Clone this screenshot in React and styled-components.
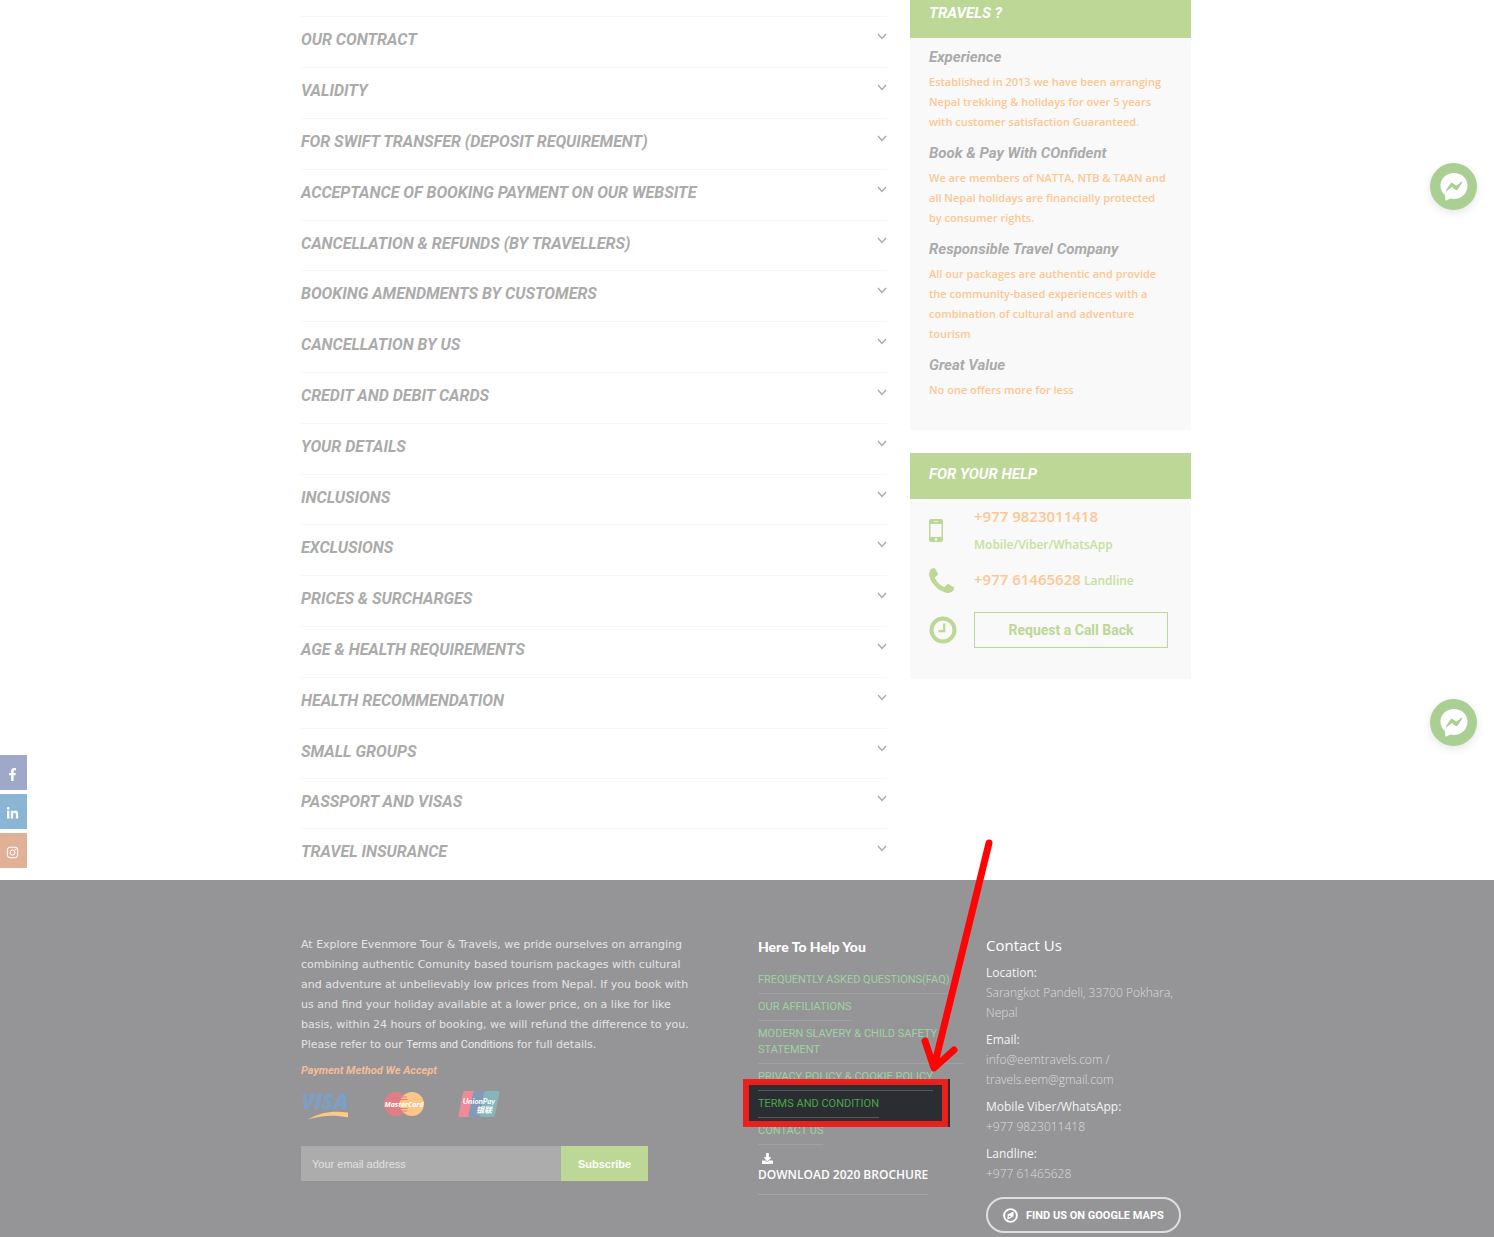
import styled, { createGlobalStyle } from "styled-components";
import {
  FaDownload,
  FaFacebookF,
  FaInstagram,
  FaLinkedinIn
} from "react-icons/fa";

const GlobalStyle = createGlobalStyle`
  * {
    box-sizing: border-box;
  }
  body {
    margin: 0;
    background: #fff;
    font-family: "Open Sans", sans-serif;
    overflow-x: hidden;
  }
  h2, h3, h4, p, ul, dl, dd {
    margin: 0;
    padding: 0;
  }
  a {
    text-decoration: none;
  }
  button {
    cursor: pointer;
  }
`;

const sections = [
  "Our Contract",
  "Validity",
  "For Swift Transfer (Deposit Requirement)",
  "Acceptance of Booking Payment on Our Website",
  "Cancellation & Refunds (By Travellers)",
  "Booking Amendments by Customers",
  "Cancellation by Us",
  "Credit and Debit Cards",
  "Your Details",
  "Inclusions",
  "Exclusions",
  "Prices & Surcharges",
  "Age & Health Requirements",
  "Health Recommendation",
  "Small Groups",
  "Passport and Visas",
  "Travel Insurance"
];

const reasons = [
  {
    title: "Experience",
    lines: [
      "Established in 2013 we have been arranging",
      "Nepal trekking & holidays for over 5 years",
      "with customer satisfaction Guaranteed."
    ]
  },
  {
    title: "Book & Pay With COnfident",
    lines: [
      "We are members of NATTA, NTB & TAAN and",
      "all Nepal holidays are financially protected",
      "by consumer rights."
    ]
  },
  {
    title: "Responsible Travel Company",
    lines: [
      "All our packages are authentic and provide",
      "the community-based experiences with a",
      "combination of cultural and adventure",
      "tourism"
    ]
  },
  { title: "Great Value", lines: ["No one offers more for less"] }
];

const contacts = [
  { label: "Location:", lines: ["Sarangkot Pandeli, 33700 Pokhara,", "Nepal"] },
  { label: "Email:", lines: ["info@eemtravels.com /", "travels.eem@gmail.com"] },
  { label: "Mobile Viber/WhatsApp:", lines: ["+977 9823011418"] },
  { label: "Landline:", lines: ["+977 61465628"] }
];

const Chevron = () => (
  <svg width="10" height="7" viewBox="0 0 10 7" fill="none" aria-hidden="true">
    <path d="M1 1l4 4.500 4-4.500" stroke="#a9a9a9" strokeWidth="1.300" />
  </svg>
);

const MobileIcon = () => (
  <svg width="14" height="23" viewBox="0 0 14 23" aria-hidden="true">
    <path
      fill="#bcd796"
      fillRule="evenodd"
      d="M2 0h10a2 2 0 0 1 2 2v19a2 2 0 0 1-2 2H2a2 2 0 0 1-2-2V2a2 2 0 0 1 2-2zM1.500 5v13h11V5zM5 2.200v.9h4v-.9zM7 19.300a1.300 1.300 0 1 0 0 2.600 1.300 1.300 0 0 0 0-2.600z"
    />
  </svg>
);

const PhoneIcon = () => (
  <svg width="25" height="25" viewBox="0 128 1408 1408" aria-hidden="true">
    <path
      fill="#bcd796"
      d="M1408 1240q0 27-10 70.500t-21 68.500q-21 50-122 106-94 51-186 51-27 0-52.500-3.500t-57.500-12.500-47.500-14.500-55.500-20.500-49-18q-98-35-175-83-128-79-264.500-215.500t-215.500-264.500q-48-77-83-175-3-9-18-49t-20.500-55.500-14.500-47.500-12.500-57.500-3.500-52.500q0-92 51-186 56-101 106-122 25-11 68.500-21t70.500-10q14 0 21 3 18 6 53 76 11 19 30 54t35 63.500 31 53.500q3 4 17.500 25t21.500 35.500 7 28.500q0 20-28.500 50t-62 55-62 53-28.500 46q0 9 5 22.500t8.500 20.500 14 24 11.500 19q76 137 174 235t235 174q2 1 19 11.500t24 14 20.500 8.500 22.500 5q18 0 46-28.500t53-62 55-62 50-28.500q14 0 28.500 7t35.500 21.500 25 17.500q25 15 53.500 31t63.500 35 54 30q70 35 76 53 3 7 3 21z"
    />
  </svg>
);

const ClockIcon = () => (
  <svg width="28" height="28" viewBox="0 0 28 28" fill="none" aria-hidden="true">
    <circle cx="14" cy="14" r="11.500" stroke="#bcd796" strokeWidth="4" />
    <path d="M15.200 7.500v7.700H9.500" stroke="#bcd796" strokeWidth="2.200" />
  </svg>
);

const CompassIcon = () => (
  <svg width="15" height="15" viewBox="0 0 15 15" fill="none" aria-hidden="true">
    <circle cx="7.500" cy="7.500" r="6.400" stroke="#fff" strokeWidth="1.900" />
    <path
      fill="#fff"
      fillRule="evenodd"
      d="M10.500 3.400v5.200l-6 3.200V6.600zM5.800 7.400v2.200l2.300-1.200z"
    />
  </svg>
);

const MessengerIcon = () => (
  <svg width="28" height="28" viewBox="0 0 28 28" aria-hidden="true">
    <path
      fill="#fff"
      d="M14 0C6.600 0 .5 5.300.5 12.700c0 4 1.900 7.100 4.500 9.500l.3 4.600c.1.700.7.800 1.200.6l3.900-1.800c1.200.3 2.400.4 3.600.4 7.500 0 13.500-5.600 13.500-13.300S21.500 0 14 0z"
    />
    <path
      fill="#a9cf92"
      d="M6 17.200l4.300-6.500c.6-.9 1.700-1.100 2.500-.5l3.500 2.600 5.200-4c.5-.4 1.100.2.800.7l-4.400 6.700c-.6.900-1.700 1.100-2.500.5l-3.500-2.600-5.200 4c-.5.400-1-.3-.7-.9z"
    />
  </svg>
);

const VisaLogo = () => (
  <svg width="50" height="32" viewBox="0 0 50 32" role="img" aria-label="Visa">
    <text
      x="1"
      y="21"
      fill="#7d9fc4"
      stroke="#7d9fc4"
      strokeWidth="0.500"
      fontFamily="Open Sans, sans-serif"
      fontSize="21"
      fontWeight="800"
      fontStyle="italic"
    >
      VISA
    </text>
    <path fill="#f9cb85" d="M7 31.500c12-7.500 26-9 40-7v5c-14-3-27-2-40 2z" />
  </svg>
);

const MasterCardLogo = () => (
  <svg width="42" height="26" viewBox="0 0 42 26" role="img" aria-label="MasterCard">
    <circle cx="13" cy="13" r="12" fill="#e07f83" />
    <circle cx="29" cy="13" r="12" fill="#fbc688" />
    <path d="M17 6h7M16.500 8.500h8M16.500 17.500h8M17 20h7" stroke="#e07f83" strokeWidth="1" />
    <text
      x="21"
      y="16"
      textAnchor="middle"
      fill="#fff"
      fontFamily="Open Sans, sans-serif"
      fontSize="7"
      fontWeight="700"
      fontStyle="italic"
    >
      MasterCard
    </text>
  </svg>
);

const UnionPayLogo = () => (
  <svg width="44" height="28" viewBox="0 0 44 28" role="img" aria-label="UnionPay">
    <path fill="#ee8b99" d="M8 1h12l-6 26H3q-2 0-1.500-2L6 3q.5-2 2-2z" />
    <path fill="#829ab5" d="M18 1h13l-6 26H13q-2 0-1.500-2L16 3q.5-2 2-2z" />
    <path fill="#85b5b8" d="M29 1h12q2 0 1.500 2L38 25q-.5 2-2 2H24q-2 0-1.500-2L27 3q.5-2 2-2z" />
    <text
      x="22"
      y="14"
      textAnchor="middle"
      fill="#fff"
      fontFamily="Lato, sans-serif"
      fontSize="8"
      fontWeight="700"
      fontStyle="italic"
    >
      UnionPay
    </text>
    <text
      x="27"
      y="23"
      textAnchor="middle"
      fill="#fff"
      fontFamily="Noto Sans CJK SC, sans-serif"
      fontSize="8"
      fontWeight="700"
      fontStyle="italic"
    >
      银联
    </text>
  </svg>
);

const App = () => {
  return (
    <>
      <GlobalStyle />
      <Container as="main">
        <Accordion>
          {sections.map(section => (
            <AccordionRow key={section}>
              <AccordionButton type="button" aria-expanded="false">
                {section}
                <Chevron />
              </AccordionButton>
            </AccordionRow>
          ))}
        </Accordion>
        <Sidebar>
          <Card>
            <CardTitle $continued>Travels ?</CardTitle>
            <Reasons>
              {reasons.map(({ title, lines }) => (
                <Reason key={title}>
                  <h4>{title}</h4>
                  {lines.map(line => (
                    <p key={line}>{line}</p>
                  ))}
                </Reason>
              ))}
            </Reasons>
          </Card>
          <Card>
            <CardTitle>For Your Help</CardTitle>
            <HelpList>
              <HelpRow>
                <MobileIcon />
                <HelpText>
                  <PhoneNumber href="tel:+9779823011418">+977 9823011418</PhoneNumber>
                  <br />
                  Mobile/Viber/WhatsApp
                </HelpText>
              </HelpRow>
              <HelpRow>
                <PhoneIcon />
                <HelpText>
                  <PhoneNumber href="tel:+97761465628">+977 61465628</PhoneNumber>{" "}
                  Landline
                </HelpText>
              </HelpRow>
              <HelpRow $last>
                <ClockIcon />
                <CallBack type="button">Request a Call Back</CallBack>
              </HelpRow>
            </HelpList>
          </Card>
        </Sidebar>
      </Container>

      <Footer>
        <Container>
          <About>
            <AboutText>
              At Explore Evenmore Tour &amp; Travels, we pride ourselves on arranging
              <br />
              combining authentic Comunity based tourism packages with cultural
              <br />
              and adventure at unbelievably low prices from Nepal. If you book with
              <br />
              us and find your holiday available at a lower price, on a like for like
              <br />
              basis, within 24 hours of booking, we will refund the difference to you.
              <br />
              Please refer to our <a href="#terms">Terms and Conditions</a> for full details.
            </AboutText>
            <PaymentTitle>Payment Method We Accept</PaymentTitle>
            <Logos>
              <VisaLogo />
              <MasterCardLogo />
              <UnionPayLogo />
            </Logos>
            <Newsletter onSubmit={e => e.preventDefault()}>
              <input type="email" placeholder="Your email address" aria-label="Your email address" />
              <button type="submit">Subscribe</button>
            </Newsletter>
          </About>

          <HelpLinks>
            <h3>Here To Help You</h3>
            <ul>
              <li><FooterLink href="#faq">Frequently Asked Questions(FAQ)</FooterLink></li>
              <li><FooterLink href="#affiliations">Our Affiliations</FooterLink></li>
              <li>
                <FooterLink href="#safety">
                  Modern Slavery &amp; Child Safety Statement
                </FooterLink>
              </li>
              <li><FooterLink href="#privacy">Privacy Policy &amp; Cookie Policy</FooterLink></li>
              <Marked id="terms">
                <Spotlight />
                <FooterLink href="#terms" $active>Terms and Condition</FooterLink>
                <Frame />
                <Arrow viewBox="0 0 50 244" aria-hidden="true">
                  <path d="M43 7L-12 231M-21 205L-12 232L8 214" />
                </Arrow>
              </Marked>
              <li><FooterLink href="#contact">Contact Us</FooterLink></li>
            </ul>
            <Brochure href="#brochure">
              <FaDownload />
              Download 2020 Brochure
            </Brochure>
          </HelpLinks>

          <Contact>
            <h3>Contact Us</h3>
            <dl>
              {contacts.map(({ label, lines }) => (
                <div key={label}>
                  <dt>{label}</dt>
                  {lines.map(line => (
                    <dd key={line}>{line}</dd>
                  ))}
                </div>
              ))}
            </dl>
            <MapLink href="#map">
              <CompassIcon />
              Find us on Google Maps
            </MapLink>
          </Contact>
        </Container>
      </Footer>

      <Social aria-label="Social links">
        <SocialLink href="#facebook" aria-label="Facebook" $color="#9fa8c8"><FaFacebookF /></SocialLink>
        <SocialLink href="#linkedin" aria-label="LinkedIn" $color="#8ab5d4"><FaLinkedinIn /></SocialLink>
        <SocialLink href="#instagram" aria-label="Instagram" $color="#e0b097"><FaInstagram /></SocialLink>
      </Social>
      <Messenger type="button" aria-label="Open chat" $top={163}><MessengerIcon /></Messenger>
      <Messenger type="button" aria-label="Open Messenger" $top={699}><MessengerIcon /></Messenger>
    </>
  );
};

const brush = `"Roboto", sans-serif`;

const Container = styled.div`
  max-width: 892px;
  margin: 0 auto;
  padding-right: 2px;
  display: flex;
`;

const Accordion = styled.ul`
  flex: 1;
  list-style: none;
  margin-right: 23px;
  padding-top: 16px;
`;
const AccordionRow = styled.li`
  border-top: 1px solid #f6f6f6;
  padding-bottom: 15px;

  &:nth-child(5n),
  &:nth-child(16) {
    padding-bottom: 14px;
  }
  &:last-child {
    padding-bottom: 16px;
  }
`;
const AccordionButton = styled.button`
  display: flex;
  justify-content: space-between;
  align-items: center;
  width: 100%;
  padding: 11px 0 0;
  border: 0;
  background: none;
  color: #ababab;
  font: italic 700 16px/24px ${brush};
  text-transform: uppercase;
  text-align: left;

  & > svg {
    margin-bottom: 8px;
  }
`;

const Sidebar = styled.aside`
  width: 281px;
`;
const Card = styled.section`
  background: #f9f9f9;
  margin-bottom: 23px;
`;
const CardTitle = styled.h3`
  padding: ${({ $continued }) => ($continued ? 1 : 9)}px 19px 13px;
  background: #bcd796;
  color: #fff;
  font: italic 700 15px/24px ${brush};
  text-transform: uppercase;
`;
const Reasons = styled.div`
  display: flex;
  flex-direction: column;
  gap: 9px;
  padding: 7px 19px 30px;
`;
const Reason = styled.div`
  & > h4 {
    margin-bottom: 3px;
    color: #ababab;
    font: italic 700 15px/24px ${brush};
  }
  & > p {
    color: #fdc793;
    font-size: 11px;
    font-weight: 600;
    line-height: 20px;
    white-space: nowrap;
  }
`;
const HelpList = styled.div`
  padding: 4px 23px 31px 19px;
`;
const HelpRow = styled.div`
  display: grid;
  grid-template-columns: 45px 1fr;
  align-items: center;
  margin-bottom: ${({ $last }) => ($last ? 0 : 8)}px;
  padding-top: ${({ $last }) => ($last ? 10 : 0)}px;
`;
const HelpText = styled.p`
  color: #c5e09c;
  font-size: 12px;
  font-weight: 600;
  line-height: 27px;
`;
const PhoneNumber = styled.a`
  color: #fdc793;
  font-size: 15px;
`;
const CallBack = styled.button`
  height: 36px;
  border: 1px solid #bcd796;
  background: none;
  color: #bcd796;
  font: 700 14px Roboto, sans-serif;
`;

const Footer = styled.footer`
  background: #959597;
  padding: 55px 0 4px;
`;
const About = styled.div`
  width: 457px;
`;
const AboutText = styled.p`
  color: #e4e4e4;
  font: 11px/20px "DejaVu Sans", sans-serif;
  white-space: nowrap;

  & > a {
    color: #ececec;
    font-family: Roboto, sans-serif;
  }
`;
const PaymentTitle = styled.h4`
  margin-top: 6px;
  color: #f7bc97;
  font: italic 700 11px/20px ${brush};
`;
const Logos = styled.div`
  display: flex;
  gap: 32px;
  height: 32px;
  margin-top: 7px;
  align-items: center;
`;
const Newsletter = styled.form`
  display: flex;
  height: 35px;
  width: 347px;
  margin-top: 26px;

  & > input {
    flex: 1;
    min-width: 0;
    padding: 0 11px;
    border: 0;
    background: #acacac;
    color: #fff;
    font: 11px "Liberation Sans", sans-serif;
  }
  & > input::placeholder {
    color: #e2e2e2;
  }
  & > button {
    width: 87px;
    border: 0;
    background: #bcd796;
    color: #fff;
    font: 700 11px "Liberation Sans", sans-serif;
  }
`;

const HelpLinks = styled.div`
  width: 228px;
  padding-right: 22px;

  & > h3 {
    margin-bottom: 13px;
    color: #fff;
    font: 900 14px/24px Lato, sans-serif;
  }
  & > ul {
    display: flex;
    flex-direction: column;
    gap: 5px;
    list-style: none;
  }
  & li {
    display: flex;
  }
`;
const FooterLink = styled.a`
  position: relative;
  z-index: 1;
  padding-bottom: 5px;
  border-bottom: 1px solid rgba(190, 190, 190, 0.3);
  color: ${({ $active }) => ($active ? "#43a94b" : "#9fd2a2")};
  font: 11px/16px Roboto, sans-serif;
  text-transform: uppercase;
`;
const Marked = styled.li`
  position: relative;
`;
const Spotlight = styled.span`
  position: absolute;
  top: -17px;
  left: -15px;
  width: 207px;
  height: 48px;
  background: #2c2d33;
`;
const Frame = styled.span`
  position: absolute;
  z-index: 2;
  top: -17px;
  left: -15px;
  width: 205px;
  height: 48px;
  border: 6px solid #e8211d;
`;
const Arrow = styled.svg`
  position: absolute;
  z-index: 3;
  top: -260px;
  left: 188px;
  width: 50px;
  height: 244px;
  overflow: visible;
  pointer-events: none;

  & > path {
    fill: none;
    stroke: #fe0404;
    stroke-width: 7px;
    stroke-linecap: round;
    stroke-linejoin: round;
  }
`;
const Brochure = styled.a`
  display: inline-flex;
  flex-direction: column;
  margin-top: 8px;
  padding-bottom: 9px;
  border-bottom: 1px solid #a3a3a5;
  color: #fff;
  font: 600 12px/20px "Open Sans", sans-serif;
  text-transform: uppercase;
  white-space: nowrap;

  & > svg {
    width: 11px;
    height: 11px;
    margin: 0 0 1px 4px;
  }
`;

const Contact = styled.div`
  flex: 1;

  & > h3 {
    margin-bottom: 8px;
    color: #fff;
    font-size: 15px;
    font-weight: 400;
    line-height: 20px;
  }
  & > dl {
    display: flex;
    flex-direction: column;
    gap: 7px;
    font-size: 12px;
    line-height: 20px;
  }
  & dt {
    color: #f4f4f4;
  }
  & dd {
    color: #dcdcdd;
    font-weight: 300;
  }
`;
const MapLink = styled.a`
  display: inline-flex;
  align-items: center;
  gap: 8px;
  height: 36px;
  margin-top: 13px;
  padding: 0 15px;
  border: 2px solid #dededf;
  border-radius: 18px;
  color: #fff;
  font: 700 11px Roboto, sans-serif;
  text-transform: uppercase;
`;

const Social = styled.nav`
  position: fixed;
  top: 755px;
  left: 0;
  display: flex;
  flex-direction: column;
  gap: 4px;
`;
const SocialLink = styled.a`
  display: flex;
  align-items: center;
  justify-content: center;
  width: 27px;
  height: 35px;
  padding: 3px 3px 0 0;
  background: ${({ $color }) => $color};
  color: #fff;
  font-size: 13px;
`;
const Messenger = styled.button`
  position: fixed;
  top: ${({ $top }) => $top}px;
  right: 17px;
  display: flex;
  align-items: center;
  justify-content: center;
  width: 47px;
  height: 47px;
  padding: 0;
  border: 0;
  border-radius: 50%;
  background: #a9cf92;
  box-shadow: 0 3px 10px rgba(0, 0, 0, 0.1);
`;

export default App;
